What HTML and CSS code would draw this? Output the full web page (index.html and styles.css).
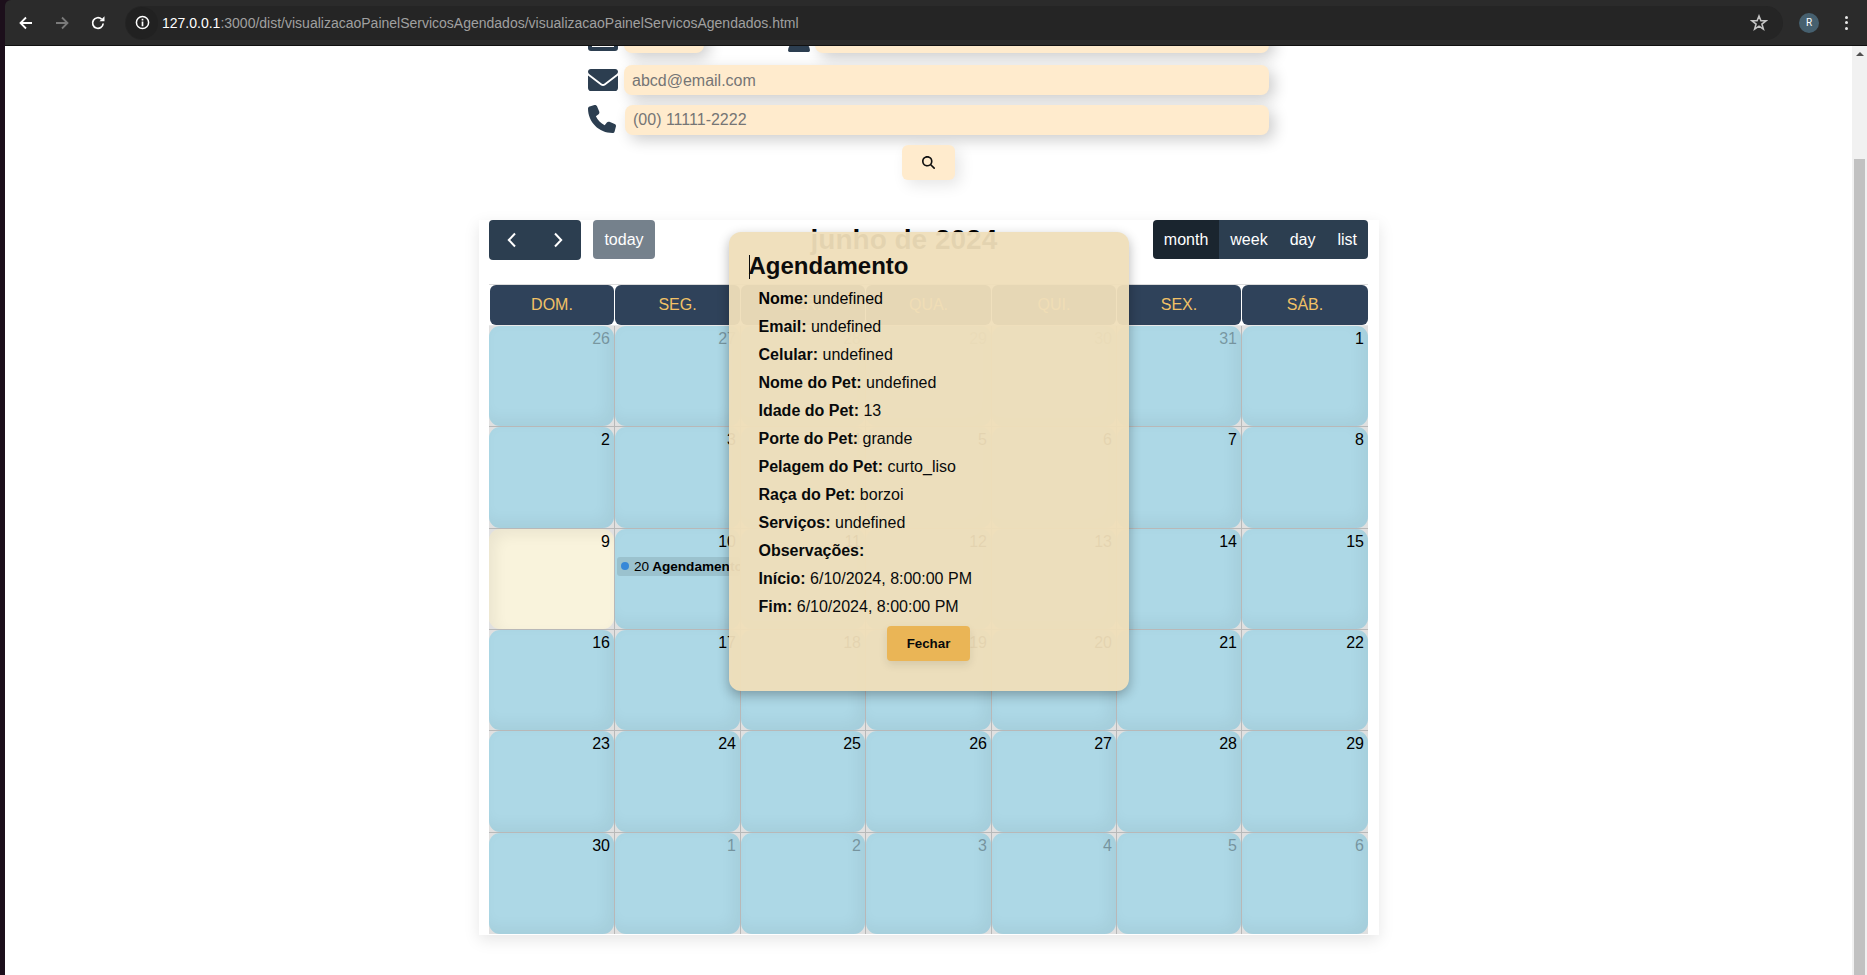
FILE: index.html
```html
<!DOCTYPE html>
<html lang="pt-BR">
<head>
    <meta charset="UTF-8">
    <meta name="viewport" content="width=device-width, initial-scale=1.0">
    <title>Painel de Serviços Agendados</title>
    <link rel="stylesheet" href="styles.css">
</head>
<body>

<!-- Browser toolbar -->
<header class="browser-bar">
    <svg class="nav-icon" viewBox="0 0 16 16"><path d="M14 8H3M8 2.500 2.500 8 8 13.500" fill="none" stroke="#fff" stroke-width="1.800"/></svg>
    <svg class="nav-icon nav-disabled" viewBox="0 0 16 16"><path d="M2 8h11M8 2.500 13.500 8 8 13.500" fill="none" stroke="#7a7a7a" stroke-width="1.800"/></svg>
    <svg class="nav-icon" viewBox="0 0 16 16"><path d="M13.200 8.500A5.300 5.300 0 1 1 11.600 4.200" fill="none" stroke="#fff" stroke-width="1.700"/><path d="M9.500 6.300h5v-5z" fill="#fff"/></svg>
    <div class="address-bar">
        <span class="site-chip">
            <svg class="info-icon" viewBox="0 0 16 16"><circle cx="8" cy="8" r="6.500" fill="none" stroke="#fff" stroke-width="1.600"/><path d="M7.100 7h1.800v5H7.100zM7.100 4h1.800v1.800H7.100z" fill="#fff"/></svg>
        </span>
        <span class="url"><span class="url-host">127.0.0.1</span>:3000/dist/visualizacaoPainelServicosAgendados/visualizacaoPainelServicosAgendados.html</span>
        <svg class="star-icon" viewBox="0 0 16 16"><path d="M8 1.800 9.700 6h4.500l-3.600 2.900 1.300 4.500L8 10.800l-3.900 2.600 1.300-4.500L1.800 6h4.500z" fill="none" stroke="#c4c4c4" stroke-width="1.400"/></svg>
    </div>
    <span class="avatar">R</span>
    <span class="menu-dots"><i></i><i></i><i></i></span>
</header>

<div class="window-body">
    <main class="page">

        <!-- Search form -->
        <form class="search-form">
            <div class="form-row form-row-first">
                <svg class="field-icon" viewBox="0 0 30 30"><rect width="30" height="28" rx="3" fill="#2c3e50"/><rect x="4" y="11" width="22" height="13" fill="#fff"/></svg>
                <input class="field field-short" type="text">
                <svg class="field-icon-user" viewBox="0 0 448 512"><path d="M224 256A128 128 0 1 0 224 0a128 128 0 1 0 0 256zm-45.700 48C79.800 304 0 383.800 0 482.300C0 498.700 13.300 512 29.700 512H418.300c16.400 0 29.700-13.300 29.700-29.700C448 383.800 368.200 304 269.700 304H178.300z" fill="#2c3e50"/></svg>
                <input class="field" type="text">
            </div>
            <div class="form-row">
                <svg class="field-icon" viewBox="0 0 512 384"><path d="M48 0C21.500 0 0 21.500 0 48c0 15.100 7.100 29.300 19.200 38.400L236.800 249.600c11.400 8.500 27 8.500 38.400 0L492.800 86.400c12.100-9.100 19.200-23.300 19.200-38.400c0-26.500-21.500-48-48-48H48zM0 112V320c0 35.300 28.700 64 64 64H448c35.300 0 64-28.700 64-64V112L294.400 275.200c-22.800 17.100-54 17.100-76.800 0L0 112z" fill="#2c3e50"/></svg>
                <input class="field field-email" type="email" placeholder="abcd@email.com">
            </div>
            <div class="form-row">
                <svg class="field-icon-phone" viewBox="0 0 512 512"><path d="M164.900 24.600c-7.700-18.600-28-28.500-47.400-23.200l-88 24C12.100 30.200 0 46 0 64C0 311.400 200.600 512 448 512c18 0 33.800-12.100 38.600-29.500l24-88c5.300-19.400-4.600-39.700-23.200-47.400l-96-40c-16.300-6.800-35.200-2.100-46.300 11.600L304.700 368C234.300 334.700 177.300 277.700 144 207.300L193.300 167c13.700-11.200 18.400-30 11.600-46.300l-40-96z" fill="#2c3e50"/></svg>
                <input class="field" type="tel" placeholder="(00) 11111-2222">
            </div>
            <button type="button" class="search-btn">
                <svg viewBox="0 0 512 512"><path d="M416 208c0 45.900-14.900 88.300-40 122.700L502.600 457.400c12.500 12.500 12.500 32.800 0 45.300s-32.800 12.500-45.300 0L330.700 376c-34.400 25.200-76.800 40-122.700 40C93.100 416 0 322.900 0 208S93.100 0 208 0S416 93.100 416 208zM208 352a144 144 0 1 0 0-288 144 144 0 1 0 0 288z" fill="#111"/></svg>
            </button>
        </form>

        <!-- Calendar -->
        <section class="calendar">
            <div class="cal-toolbar">
                <div class="cal-left">
                    <div class="btn-group">
                        <button type="button" class="cal-btn cal-arrow"><svg viewBox="0 0 10 16"><path d="M8 1.500 1.800 8 8 14.500" fill="none" stroke="#fff" stroke-width="2"/></svg></button>
                        <button type="button" class="cal-btn cal-arrow"><svg viewBox="0 0 10 16"><path d="M2 1.500 8.200 8 2 14.500" fill="none" stroke="#fff" stroke-width="2"/></svg></button>
                    </div>
                    <button type="button" class="cal-btn cal-today">today</button>
                </div>
                <h2 class="cal-title">junho de 2024</h2>
                <div class="btn-group btn-group-views">
                    <button type="button" class="cal-btn cal-view cal-view-active">month</button>
                    <button type="button" class="cal-btn cal-view">week</button>
                    <button type="button" class="cal-btn cal-view">day</button>
                    <button type="button" class="cal-btn cal-view">list</button>
                </div>
            </div>

            <div class="week-head">
                <div class="week-name">DOM.</div>
                <div class="week-name">SEG.</div>
                <div class="week-name">TER.</div>
                <div class="week-name">QUA.</div>
                <div class="week-name">QUI.</div>
                <div class="week-name">SEX.</div>
                <div class="week-name">SÁB.</div>
            </div>

            <div class="month-grid">
                <div class="day other"><div class="day-box"><span class="day-number">26</span></div></div>
                <div class="day other"><div class="day-box"><span class="day-number">27</span></div></div>
                <div class="day other"><div class="day-box"><span class="day-number">28</span></div></div>
                <div class="day other"><div class="day-box"><span class="day-number">29</span></div></div>
                <div class="day other"><div class="day-box"><span class="day-number">30</span></div></div>
                <div class="day other"><div class="day-box"><span class="day-number">31</span></div></div>
                <div class="day"><div class="day-box"><span class="day-number">1</span></div></div>

                <div class="day"><div class="day-box"><span class="day-number">2</span></div></div>
                <div class="day"><div class="day-box"><span class="day-number">3</span></div></div>
                <div class="day"><div class="day-box"><span class="day-number">4</span></div></div>
                <div class="day"><div class="day-box"><span class="day-number">5</span></div></div>
                <div class="day"><div class="day-box"><span class="day-number">6</span></div></div>
                <div class="day"><div class="day-box"><span class="day-number">7</span></div></div>
                <div class="day"><div class="day-box"><span class="day-number">8</span></div></div>

                <div class="day today"><div class="day-box"><span class="day-number">9</span></div></div>
                <div class="day">
                    <div class="day-box">
                        <span class="day-number">10</span>
                        <div class="event"><i class="event-dot"></i><span>20</span> <b>Agendamento</b></div>
                    </div>
                </div>
                <div class="day"><div class="day-box"><span class="day-number">11</span></div></div>
                <div class="day"><div class="day-box"><span class="day-number">12</span></div></div>
                <div class="day"><div class="day-box"><span class="day-number">13</span></div></div>
                <div class="day"><div class="day-box"><span class="day-number">14</span></div></div>
                <div class="day"><div class="day-box"><span class="day-number">15</span></div></div>

                <div class="day"><div class="day-box"><span class="day-number">16</span></div></div>
                <div class="day"><div class="day-box"><span class="day-number">17</span></div></div>
                <div class="day"><div class="day-box"><span class="day-number">18</span></div></div>
                <div class="day"><div class="day-box"><span class="day-number">19</span></div></div>
                <div class="day"><div class="day-box"><span class="day-number">20</span></div></div>
                <div class="day"><div class="day-box"><span class="day-number">21</span></div></div>
                <div class="day"><div class="day-box"><span class="day-number">22</span></div></div>

                <div class="day"><div class="day-box"><span class="day-number">23</span></div></div>
                <div class="day"><div class="day-box"><span class="day-number">24</span></div></div>
                <div class="day"><div class="day-box"><span class="day-number">25</span></div></div>
                <div class="day"><div class="day-box"><span class="day-number">26</span></div></div>
                <div class="day"><div class="day-box"><span class="day-number">27</span></div></div>
                <div class="day"><div class="day-box"><span class="day-number">28</span></div></div>
                <div class="day"><div class="day-box"><span class="day-number">29</span></div></div>

                <div class="day"><div class="day-box"><span class="day-number">30</span></div></div>
                <div class="day other"><div class="day-box"><span class="day-number">1</span></div></div>
                <div class="day other"><div class="day-box"><span class="day-number">2</span></div></div>
                <div class="day other"><div class="day-box"><span class="day-number">3</span></div></div>
                <div class="day other"><div class="day-box"><span class="day-number">4</span></div></div>
                <div class="day other"><div class="day-box"><span class="day-number">5</span></div></div>
                <div class="day other"><div class="day-box"><span class="day-number">6</span></div></div>
            </div>
        </section>

        <!-- Appointment modal -->
        <div class="modal">
            <h2 class="modal-title"><i class="caret"></i>Agendamento</h2>
            <div class="modal-details">
                <p><strong>Nome:</strong> undefined</p>
                <p><strong>Email:</strong> undefined</p>
                <p><strong>Celular:</strong> undefined</p>
                <p><strong>Nome do Pet:</strong> undefined</p>
                <p><strong>Idade do Pet:</strong> 13</p>
                <p><strong>Porte do Pet:</strong> grande</p>
                <p><strong>Pelagem do Pet:</strong> curto_liso</p>
                <p><strong>Raça do Pet:</strong> borzoi</p>
                <p><strong>Serviços:</strong> undefined</p>
                <p><strong>Observações:</strong></p>
                <p><strong>Início:</strong> 6/10/2024, 8:00:00 PM</p>
                <p><strong>Fim:</strong> 6/10/2024, 8:00:00 PM</p>
            </div>
            <button type="button" class="close-btn">Fechar</button>
        </div>
    </main>

    <!-- Page scrollbar -->
    <div class="scrollbar">
        <i class="scroll-arrow"></i>
        <div class="scroll-thumb"></div>
    </div>
</div>

</body>
</html>
```

FILE: styles.css
```css
* {
    box-sizing: border-box;
}

body {
    margin: 0;
    height: 100vh;
    overflow: hidden;
    display: flex;
    flex-direction: column;
    padding-left: 5px;
    background-color: #1c0f1b;
    font-family: 'Liberation Sans', Arial, sans-serif;
    font-size: 16px;
    color: #000;
}

/* Browser toolbar */
.browser-bar {
    flex: 0 0 46px;
    display: flex;
    align-items: center;
    background-color: #2b2b2b;
    border-bottom: 1px solid #111;
    border-top-left-radius: 6px;
    padding-left: 13px;
}

.nav-icon {
    width: 16px;
    height: 16px;
    margin-right: 20px;
    flex: none;
}

.address-bar {
    width: 1658px;
    height: 34px;
    margin-left: -1px;
    display: flex;
    align-items: center;
    background-color: #252525;
    border-radius: 17px;
    font-family: 'Liberation Sans', Arial, sans-serif;
    font-size: 14px;
}

.site-chip {
    width: 32px;
    height: 32px;
    margin-left: 1px;
    display: flex;
    align-items: center;
    justify-content: center;
    border-radius: 50%;
    background-color: #212121;
}

.info-icon {
    width: 15px;
    height: 15px;
}

.url {
    margin-left: 4px;
    color: #a0a0a0;
    white-space: nowrap;
}

.url-host {
    color: #fff;
}

.star-icon {
    width: 18px;
    height: 18px;
    margin-left: auto;
    margin-right: 15px;
}

.avatar {
    width: 20px;
    height: 20px;
    margin-left: 16px;
    border-radius: 50%;
    background-color: #46606f;
    color: #fff;
    font-size: 10px;
    line-height: 20px;
    text-align: center;
    font-family: 'Roboto', sans-serif;
}

.menu-dots {
    margin-left: 26px;
    display: flex;
    flex-direction: column;
    gap: 2.5px;
}

.menu-dots i {
    width: 3px;
    height: 3px;
    border-radius: 50%;
    background-color: #e8e8e8;
}

/* Page area */
.window-body {
    flex: 1;
    min-height: 0;
    display: flex;
}

.page {
    flex: 1;
    position: relative;
    overflow: hidden;
    background-color: #fff;
}

.scrollbar {
    flex: 0 0 15px;
    display: flex;
    flex-direction: column;
    align-items: center;
    background-color: #f1f1f1;
    padding-top: 6px;
}

.scroll-arrow {
    width: 0;
    height: 0;
    border-left: 4px solid transparent;
    border-right: 4px solid transparent;
    border-bottom: 4px solid #505050;
}

.scroll-thumb {
    flex: 1;
    width: 11px;
    margin-top: 103px;
    background-color: #c1c1c1;
}

/* Search form, scrolled partly out of view */
.search-form {
    width: 681px;
    margin: -23px auto 0;
    display: flex;
    flex-direction: column;
    gap: 10px;
}

.form-row {
    display: flex;
    align-items: center;
}

.form-row-first {
    margin-bottom: 2px;
}

.field-icon {
    width: 30px;
    flex: none;
    margin-right: 6px;
}

.field-icon-user {
    width: 22px;
    height: 25px;
    flex: none;
    align-self: flex-end;
    margin: 0 5px 1px 84px;
}

.field-icon-phone {
    width: 28px;
    height: 28px;
    flex: none;
    align-self: flex-start;
    margin-right: 9px;
}

.field {
    flex: 1;
    min-width: 0;
    height: 30px;
    padding: 0 8px;
    border: none;
    border-radius: 8px;
    background-color: #ffebcd;
    box-shadow: 5px 5px 15px rgba(0, 0, 0, 0.2);
    font-family: inherit;
    font-size: 16px;
}

.field-email {
    padding-top: 2px;
}

.field-short {
    flex: 0 0 80px;
}

.search-btn {
    width: 53px;
    height: 35px;
    margin: 0 auto;
    padding: 0;
    border: none;
    border-radius: 6px;
    background-color: #ffebcd;
    box-shadow: 5px 5px 15px rgba(0, 0, 0, 0.1);
}

.search-btn svg {
    display: block;
    width: 13px;
    height: 13px;
    margin: 0 auto;
}

/* Calendar */
.calendar {
    width: 900px;
    margin: 40px 0 0 474px;
    padding: 0 11px 1px 10px;
    background-color: #fff;
    box-shadow: 0 5px 15px rgba(0, 0, 0, 0.1);
}

.cal-toolbar {
    display: flex;
    justify-content: space-between;
    align-items: flex-start;
    margin-bottom: 24px;
}

.cal-left {
    display: flex;
    gap: 12px;
}

.cal-title {
    margin: 0;
    font-size: 28px;
    line-height: 40px;
    font-weight: bold;
}

.btn-group {
    display: flex;
    border-radius: 4px;
    overflow: hidden;
}

.cal-btn {
    height: 39px;
    border: none;
    background-color: #2c3e50;
    color: #fff;
    font-family: inherit;
    font-size: 16px;
}

.cal-arrow {
    width: 46px;
    height: 40px;
    padding: 0;
}

.cal-arrow svg {
    display: block;
    width: 10px;
    height: 16px;
    margin: 0 auto;
}

.cal-today {
    width: 62px;
    padding: 0;
    border-radius: 4px;
    opacity: 0.65;
}

.cal-view {
    padding: 0 11px;
}

.cal-view-active {
    background-color: #1a252f;
}

/* Columns are whole pixels, as the table layout of the calendar gives them */
.week-head,
.month-grid {
    display: grid;
    grid-template-columns: 126px 126px 125px 126px 125px 125px 126px;
}

.week-head {
    height: 42px;
    padding: 1px 0;
    background: linear-gradient(#dcdcdc 1px, #fff 1px, #fff 41px, #e8e8e8 41px);
}

.week-name {
    display: flex;
    align-items: center;
    justify-content: center;
    margin-right: 1px;
    background-color: #2f425a;
    border-radius: 6px;
    color: #f2c166;
}

.week-name:first-child {
    margin-left: 1px;
}

.week-name:last-child {
    margin-right: 0;
}

.month-grid {
    grid-template-rows: repeat(6, 1fr);
    height: 608px;
}

.day {
    min-width: 0;
    min-height: 0;
    border-right: 1px solid #b8b8b8;
    border-bottom: 1px solid #b8b8b8;
    background-color: #e0e0e0;
}

.day:nth-child(7n) {
    border-right: none;
}

.day:nth-child(n+36) {
    border-bottom: none;
}

.day-box {
    height: 100%;
    padding: 4px;
    overflow: hidden;
    border-radius: 11px;
    background-color: #add8e6;
    box-shadow: inset -6px -6px 15px rgba(0, 0, 0, 0.05);
    text-align: right;
}

.day-number {
    display: block;
    line-height: 18px;
}

.other .day-number {
    opacity: 0.3;
}

.today .day-box {
    background-color: #f9f3dc;
    box-shadow: inset 6px 6px 14px rgba(0, 0, 0, 0.06);
}

.event {
    display: flex;
    align-items: center;
    gap: 5px;
    height: 19px;
    margin: 6px -4px 0 -2px;
    padding-left: 4px;
    border-radius: 3px;
    background-color: rgba(0, 0, 0, 0.1);
    font-size: 13.6px;
    white-space: nowrap;
    text-align: left;
}

.event b {
    margin-left: -2px;
}

.event-dot {
    flex: none;
    width: 8px;
    height: 8px;
    border-radius: 50%;
    background-color: #3788d8;
}

/* Appointment modal */
.modal {
    position: absolute;
    top: 186px;
    left: 50%;
    width: 400px;
    margin-left: -200px;
    padding: 20px 20px 30px;
    display: flex;
    flex-direction: column;
    border-radius: 12px;
    background-color: #f0dfba;
    box-shadow: 0 4px 12px rgba(0, 0, 0, 0.3);
    opacity: 0.95;
}

.modal-title {
    margin: 0 0 10px;
    font-size: 24px;
    line-height: 28px;
}

.caret {
    display: inline-block;
    width: 1px;
    height: 24px;
    margin-right: -1px;
    vertical-align: -5px;
    background-color: #000;
}

.modal-details {
    display: flex;
    flex-direction: column;
    gap: 10px;
    padding-left: 10px;
}

.modal-details p {
    margin: 0;
    line-height: 18px;
}

.close-btn {
    align-self: center;
    width: 83px;
    height: 35px;
    margin-top: 10px;
    border: none;
    border-radius: 4px;
    background-color: #eeb44f;
    box-shadow: 0 4px 8px rgba(0, 0, 0, 0.1);
    font-family: inherit;
    font-size: 13.33px;
    font-weight: bold;
}
```
